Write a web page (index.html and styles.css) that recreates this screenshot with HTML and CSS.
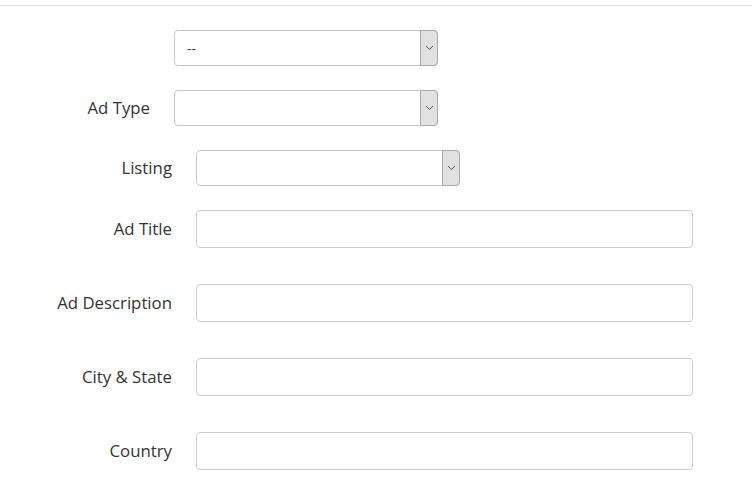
FILE: index.html
```html
<!DOCTYPE html>
<html>
<head>
<meta charset="utf-8">
<link rel="stylesheet" href="styles.css">
</head>
<body>
<div class="page">
  <form class="form">
    <div class="row row-select row-narrow">
      <label class="label"></label>
      <div class="select"><span class="select-text">--</span><span class="arrow"><svg width="9" height="6" viewBox="0 0 9 6"><path d="M1 1 L4.5 4.5 L8 1" fill="none" stroke="#555" stroke-width="1"/></svg></span></div>
    </div>
    <div class="row row-select row-narrow">
      <label class="label">Ad Type</label>
      <div class="select"><span class="select-text"></span><span class="arrow"><svg width="9" height="6" viewBox="0 0 9 6"><path d="M1 1 L4.5 4.5 L8 1" fill="none" stroke="#555" stroke-width="1"/></svg></span></div>
    </div>
    <div class="row row-select">
      <label class="label">Listing</label>
      <div class="select"><span class="select-text"></span><span class="arrow"><svg width="9" height="6" viewBox="0 0 9 6"><path d="M1 1 L4.5 4.5 L8 1" fill="none" stroke="#555" stroke-width="1"/></svg></span></div>
    </div>
    <div class="row row-input">
      <label class="label">Ad Title</label>
      <input class="input" type="text">
    </div>
    <div class="row row-input">
      <label class="label">Ad Description</label>
      <input class="input" type="text">
    </div>
    <div class="row row-input">
      <label class="label">City &amp; State</label>
      <input class="input" type="text">
    </div>
    <div class="row row-input">
      <label class="label">Country</label>
      <input class="input" type="text">
    </div>
  </form>
</div>
</body>
</html>
```

FILE: styles.css
```css
html, body {
  margin: 0;
  padding: 0;
  background: #fff;
}
body {
  font-family: "Open Sans", "Liberation Sans", sans-serif;
  color: #333;
}
.page {
  padding-top: 5px;
}
.form {
  border-top: 1px solid #e3e3e3;
  padding-top: 24px;
  display: flex;
  flex-direction: column;
}
.row {
  display: flex;
  align-items: center;
  gap: 24px;
}
.label {
  width: 172px;
  text-align: right;
  font-size: 16.8px;
  line-height: 24px;
  color: #333;
  flex: none;
}
.row-narrow .label {
  width: 150px;
}
.row-select {
  height: 36px;
  margin-bottom: 24px;
}
.row-input {
  height: 38px;
  margin-bottom: 36px;
}
.select {
  box-sizing: border-box;
  width: 264px;
  height: 36px;
  border: 1px solid #c8c8c8;
  border-radius: 4px;
  display: flex;
  align-items: center;
  background: #fff;
}
.select-text {
  padding-left: 12px;
  font-size: 14px;
  color: #444;
}
.arrow {
  box-sizing: border-box;
  margin: -1px -1px -1px auto;
  align-self: stretch;
  width: 18px;
  background: #e1e1e1;
  border: 1px solid #a9a9a9;
  border-radius: 0 4px 4px 0;
  display: flex;
  align-items: center;
  justify-content: center;
}
.arrow svg {
  display: block;
}
.input {
  box-sizing: border-box;
  width: 497px;
  height: 38px;
  border: 1px solid #ccc;
  border-radius: 4px;
  margin: 0;
  padding: 0 12px;
  font-family: inherit;
  font-size: 14px;
  background: #fff;
  outline: none;
}
```
